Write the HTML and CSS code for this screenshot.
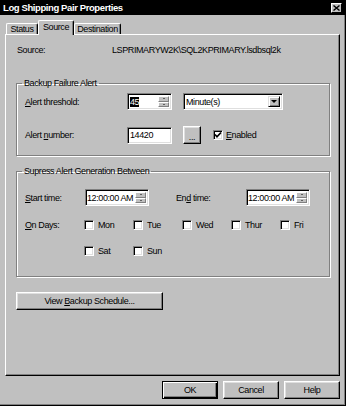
FILE: index.html
```html
<!DOCTYPE html>
<html lang="en">
<head>
    <meta charset="UTF-8">
    <title>Log Shipping Pair Properties</title>
    <link rel="stylesheet" href="styles.css">
</head>
<body>
<div class="window">
    <div class="titlebar">
        <span class="title">Log Shipping Pair Properties</span>
        <span class="close">
            <svg width="7" height="6" viewBox="0 0 7 6"><path d="M0.5 0.5 L6.5 5.5 M6.5 0.5 L0.5 5.5" stroke="#000" stroke-width="1.4" fill="none"/></svg>
        </span>
    </div>
    <div class="tabs">
        <div class="tab tab-status">Status</div>
        <div class="tab tab-source active">Source</div>
        <div class="tab tab-dest">Destination</div>
    </div>
    <div class="panel">
        <div class="source-row">
            <span class="source-label">Source:</span>
            <span>LSPRIMARYW2K\SQL2KPRIMARY.lsdbsql2k</span>
        </div>

        <fieldset class="group alert-group">
            <legend>Backup Failure Alert</legend>
            <div class="row r1">
                <label class="label label-alert"><u>A</u>lert threshold:</label>
                <div class="edit threshold">
                    <span class="sel">45</span>
                    <span class="spin"><span class="spin-up"></span><span class="spin-down"></span></span>
                </div>
                <div class="edit combo">
                    <span>Minute(s)</span>
                    <span class="combo-btn"></span>
                </div>
            </div>
            <div class="row r2">
                <label class="label label-alert">Alert <u>n</u>umber:</label>
                <div class="edit number">14420</div>
                <button class="btn dots">...</button>
                <label class="checkline enabled">
                    <span class="check">
                        <svg width="8" height="8" viewBox="0 0 8 8"><path d="M1 3.5 L3 5.8 L7 1.5" stroke="#000" stroke-width="1.7" fill="none"/></svg>
                    </span>
                    <span><u>E</u>nabled</span>
                </label>
            </div>
        </fieldset>

        <fieldset class="group suppress-group">
            <legend>Supress Alert Generation Between</legend>
            <div class="row r3">
                <label class="label label-time"><u>S</u>tart time:</label>
                <div class="edit time">
                    <span>12:00:00 AM</span>
                    <span class="spin"><span class="spin-up"></span><span class="spin-down"></span></span>
                </div>
                <label class="label label-end">En<u>d</u> time:</label>
                <div class="edit time">
                    <span>12:00:00 AM</span>
                    <span class="spin"><span class="spin-up"></span><span class="spin-down"></span></span>
                </div>
            </div>
            <div class="days">
                <label class="label label-time"><u>O</u>n Days:</label>
                <div class="days-grid">
                    <label class="checkline"><span class="check"></span>Mon</label>
                    <label class="checkline"><span class="check"></span>Tue</label>
                    <label class="checkline"><span class="check"></span>Wed</label>
                    <label class="checkline"><span class="check"></span>Thur</label>
                    <label class="checkline"><span class="check"></span>Fri</label>
                    <label class="checkline"><span class="check"></span>Sat</label>
                    <label class="checkline"><span class="check"></span>Sun</label>
                </div>
            </div>
        </fieldset>

        <button class="btn schedule">View <u>B</u>ackup Schedule...</button>
    </div>
    <div class="buttons">
        <button class="btn big default">OK</button>
        <button class="btn big">Cancel</button>
        <button class="btn big">Help</button>
    </div>
</div>
</body>
</html>
```

FILE: styles.css
```css
body {
    margin: 0;
    font-family: "Liberation Sans", Arial, sans-serif;
    font-size: 9px;
    letter-spacing: -0.4px;
    line-height: 12px;
    white-space: nowrap;
    color: #000;
    background: #c0c0c0;
}
.window {
    width: 346px;
    height: 406px;
    box-sizing: border-box;
    border-right: 1px solid #000;
    border-bottom: 1px solid #000;
    box-shadow: inset -1px -1px #808080;
    background: #c0c0c0;
}
.titlebar {
    display: flex;
    align-items: center;
    height: 15px;
    padding-left: 3px;
    background: #000;
    color: #fff;
    font-weight: bold;
    font-size: 9.5px;
}
.close {
    margin-left: auto;
    margin-right: 3px;
    width: 11px;
    height: 10px;
    box-sizing: border-box;
    display: flex;
    align-items: center;
    justify-content: center;
    background: #c0c0c0;
    border: 1px solid;
    border-color: #fff #000 #000 #fff;
}
.close svg {
    display: block;
}

/* tabs */
.tabs {
    display: flex;
    align-items: flex-end;
    height: 14px;
    margin-top: 5px;
    padding-left: 6px;
}
.tab {
    box-sizing: border-box;
    height: 11px;
    line-height: 10px;
    text-align: center;
    border-top: 1px solid #fff;
    border-left: 1px solid #fff;
    border-right: 1px solid #000;
    box-shadow: inset -1px 0 #808080;
    border-radius: 2px 2px 0 0;
}
.tab-status { width: 32px; }
.tab-source { width: 36px; }
.tab-dest { width: 47px; }
.tab.active {
    height: 15px;
    margin-bottom: -1px;
    line-height: 12px;
    position: relative;
    z-index: 1;
    background: #c0c0c0;
}

/* page */
.panel {
    width: 335px;
    height: 342px;
    margin-left: 5px;
    box-sizing: border-box;
    border: 1px solid;
    border-color: #fff #000 #000 #fff;
    box-shadow: inset -1px -1px #808080;
    padding: 9px 0 0 10px;
}
.source-row {
    display: flex;
    padding-left: 1px;
}
.source-label {
    width: 95px;
}

.group {
    margin: 0;
    padding: 0 0 11px 8px;
    width: 314px;
    min-width: 0;
    box-sizing: border-box;
    border: 1px solid #808080;
    box-shadow: inset 1px 1px #fff, 1px 1px #fff;
}
.group legend {
    padding: 0 2px;
    margin-left: -3px;
    line-height: 12px;
}
.alert-group {
    margin-top: 21px;
}
.suppress-group {
    margin-top: 9px;
    padding-bottom: 19px;
}
.row {
    display: flex;
    align-items: center;
}
.r1 {
    margin-top: 4px;
    height: 17px;
}
.r2 {
    margin-top: 16px;
    height: 18px;
}
.r3 {
    margin-top: 12px;
    height: 17px;
}
.label-alert { width: 102px; }
.label-time { width: 60px; }
.label-end {
    width: 70px;
    margin-left: 27px;
}

/* sunken fields */
.edit {
    box-sizing: border-box;
    height: 17px;
    display: flex;
    align-items: center;
    padding: 2px;
    background: #fff;
    border: 1px solid;
    border-color: #808080 #fff #fff #808080;
    box-shadow: inset 1px 1px #000, inset -1px -1px #dfdfdf;
}
.threshold, .number { width: 45px; }
.time {
    width: 64px;
    padding-left: 1px;
}
.sel {
    background: #000;
    color: #fff;
    line-height: 10px;
}
.combo {
    width: 100px;
    margin-left: 11px;
}
.spin, .combo-btn {
    margin-left: auto;
    align-self: stretch;
}
.spin {
    display: flex;
    flex-direction: column;
    width: 11px;
}
.spin span, .combo-btn {
    box-sizing: border-box;
    display: flex;
    align-items: center;
    justify-content: center;
    background: #c0c0c0;
    border: 1px solid;
    border-color: #fff #808080 #808080 #fff;
}
.spin span {
    flex: 1;
}
.spin-up::after, .spin-down::after, .combo-btn::after {
    content: "";
    width: 0;
    height: 0;
    border-left: 1px solid transparent;
    border-right: 1px solid transparent;
}
.spin-up::after { border-bottom: 1px solid #000; }
.spin-down::after { border-top: 1px solid #000; }
.combo-btn {
    width: 12px;
    border-color: #dfdfdf #000 #000 #dfdfdf;
    box-shadow: inset 1px 1px #fff, inset -1px -1px #808080;
}
.combo-btn::after {
    border-left-width: 3px;
    border-right-width: 3px;
    border-top: 3px solid #000;
}

/* checkboxes */
.checkline {
    display: flex;
    align-items: center;
    height: 12px;
}
.check {
    box-sizing: border-box;
    width: 10px;
    height: 10px;
    margin-right: 4px;
    display: flex;
    align-items: center;
    justify-content: center;
    background: #fff;
    border: 1px solid;
    border-color: #808080 #fff #fff #808080;
    box-shadow: inset 1px 1px #000, inset -1px -1px #dfdfdf;
}
.check svg {
    display: block;
}
.enabled {
    margin-left: 12px;
}
.enabled .check {
    margin-right: 3px;
}
.days {
    display: flex;
    margin-top: 13px;
}
.days-grid {
    display: grid;
    grid-template-columns: repeat(5, 49px);
    row-gap: 14px;
}

/* buttons */
.btn {
    box-sizing: border-box;
    padding: 0;
    font: inherit;
    letter-spacing: inherit;
    line-height: 12px;
    color: #000;
    background: #c0c0c0;
    border: 1px solid;
    border-color: #fff #000 #000 #fff;
    box-shadow: inset -1px -1px #808080, inset 1px 1px #dfdfdf;
}
.dots {
    width: 18px;
    height: 18px;
    margin-left: 11px;
    padding-top: 3px;
}
.schedule {
    display: block;
    width: 147px;
    height: 18px;
    margin-top: 15px;
}
.buttons {
    display: flex;
    justify-content: flex-end;
    gap: 5px;
    margin-top: 5px;
    padding-right: 5px;
}
.big {
    width: 56px;
    height: 18px;
}
.default {
    border-color: #000;
    box-shadow: inset 1px 1px #fff, inset -1px -1px #000, inset -2px -2px #808080;
}
```
